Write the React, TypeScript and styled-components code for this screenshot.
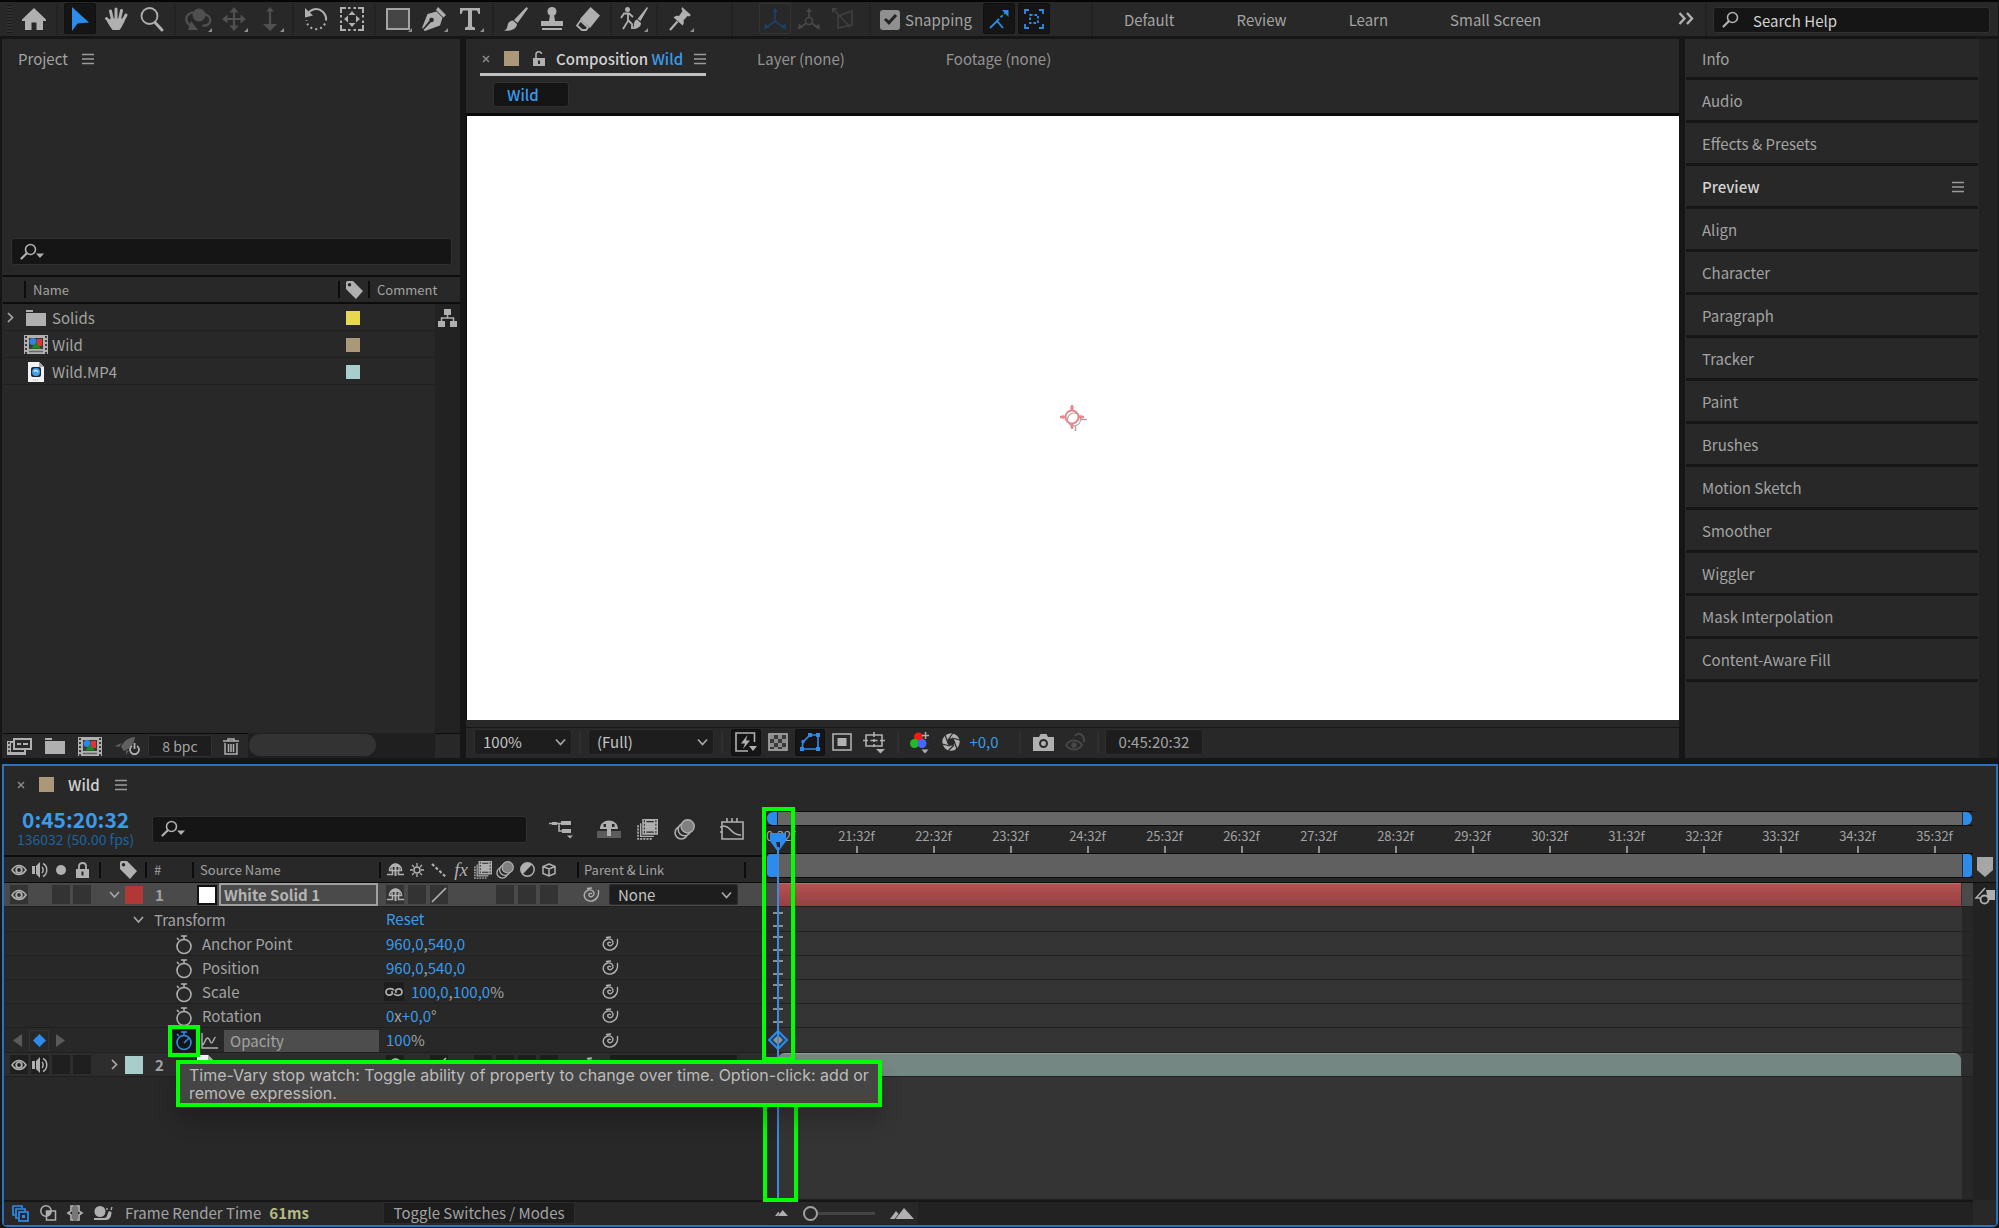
import React from "react";
import styled, { createGlobalStyle, css } from "styled-components";

const ui = `"Noto Sans CJK SC", "Noto Sans", sans-serif`;
const c = {
  gap: "#161616",
  panel: "#282828",
  well: "#151515",
  edge: "#303030",
  field: "#1d1d1d",
  line: "#0c0c0c",
  rule: "#202020",
  text: "#a3a3a3",
  dim: "#8f8f8f",
  bright: "#d2d2d2",
  icon: "#b0b0b0",
  blue: "#2d8ceb",
  value: "#3a9bea",
  frame: "#2873c0",
  lime: "#00ff00",
  scroll: "#222222",
};

const Global = createGlobalStyle`
  *, *::before, *::after { box-sizing: border-box; }
  html, body { margin: 0; background: ${c.gap}; }
  body, button, input, select, table { font-family: ${ui}; font-size: 15px; line-height: 20px; color: ${c.text}; }
  button, input, select { margin: 0; padding: 0; border: 0; background: none; outline: none; }
  svg { display: block; flex: none; }
`;

/* ---------- icons ---------- */

type IconProps = { w?: number; h?: number; box?: string; color?: string; children: React.ReactNode };
const Glyph = styled.svg<{ $color: string }>`
  color: ${(p) => p.$color};
  fill: none;
  stroke: none;
  overflow: visible;
`;
const Icon = ({ w = 24, h = w, box, color = c.icon, children }: IconProps) => (
  <Glyph $color={color} width={w} height={h} viewBox={box ?? `0 0 ${w} ${h}`} aria-hidden="true">
    {children}
  </Glyph>
);
const cur = "currentColor";

const Home = () => (
  <Icon w={24} h={22}>
    <path fill={cur} d="M12 0 0 11.5V13h3v9h6.500v-7.500h5V22H21v-9h3v-1.500z" />
  </Icon>
);
const Arrow = () => (
  <Icon w={18} h={24} color={c.blue}>
    <path fill={cur} d="M1 0v24l5.500-7.500L18 15.500z" />
  </Icon>
);
const Hand = () => (
  <Icon w={24} h={24}>
    <g stroke={cur} strokeWidth="3" strokeLinecap="round">
      <path d="M8.500 13 6.500 4M12 12V2M15.500 12.500 17.500 3.500M18.500 14.500 22 8M7.500 16.500 2.500 11.500" />
    </g>
    <path fill={cur} d="M7 11.500h12l1.500 3L17 21l-1.500 2h-7L6 19.500l-3-5z" />
  </Icon>
);
const Magnifier = ({ w = 24 }: { w?: number }) => (
  <Icon w={w} box="0 0 24 24">
    <circle cx="9.500" cy="9" r="8" stroke={cur} strokeWidth="1.800" />
    <path stroke={cur} strokeWidth="3" strokeLinecap="round" d="m15.500 16 6.500 7" />
  </Icon>
);
const SearchGlyph = ({ menu }: { menu?: boolean }) => (
  <Icon w={24} h={18}>
    <circle cx="10.500" cy="6.500" r="5" stroke={cur} strokeWidth="1.600" />
    <path stroke={cur} strokeWidth="2.200" strokeLinecap="round" d="M6.500 10.500 1.500 15.500" />
    {menu && <path fill={cur} d="M16 10.500h8l-4 4.500z" />}
  </Icon>
);
const Orbit = () => (
  <Icon w={26} h={24} color="#505050">
    <circle cx="14" cy="8" r="6.500" fill={cur} />
    <path stroke={cur} strokeWidth="2.200" d="M8 5C2 7 0 11 2 15c1 2 3 3.500 6 4M20 7c5 2 6.500 6 4.500 9-1.500 2-4 3-7 2.500" />
    <path fill={cur} d="m6 14 7 9H3z" />
  </Icon>
);
const PanCam = () => (
  <Icon w={24} color="#505050">
    <path stroke={cur} strokeWidth="2.200" d="M12 3v18M3 12h18" />
    <path fill={cur} d="m12 0 4.500 5.500h-9zM12 24l4.500-5.500h-9zM0 12l5.500-4.500v9zM24 12l-5.500-4.500v9z" />
  </Icon>
);
const Dolly = () => (
  <Icon w={16} h={24} color="#505050">
    <path stroke={cur} strokeWidth="2.200" d="M8 3v18" />
    <path fill={cur} d="m8 0 4 4.500H4zM8 24l7-7H1z" />
  </Icon>
);
const Rotate = () => (
  <Icon w={24}>
    <path stroke={cur} strokeWidth="2" d="M3.500 7C7 1.500 14 .5 18.500 4.500 22 8 22.500 11 22 13.500" />
    <path stroke={cur} strokeWidth="2" strokeDasharray="2 3" d="M21 16.500C18.500 22 12 23.500 7.500 21 4 19 2.500 16 2.500 13" />
    <path fill={cur} d="M1 1v9.500l8-2z" />
  </Icon>
);
const PanBehind = () => (
  <Icon w={24}>
    <path
      stroke={cur}
      strokeWidth="2"
      d="M1 6V1h5M18 1h5v5M23 18v5h-5M6 23H1v-5M8 1h2.500M13.500 1H16M8 23h2.500M13.500 23H16M1 8v2.500M1 13.500V16M23 8v2.500M23 13.500V16"
    />
    <path fill={cur} d="m12 4 3.500 4h-7zM12 20l3.500-4h-7zM4 12l4-3.500v7zM20 12l-4-3.500v7z" />
  </Icon>
);
const RectShape = () => (
  <Icon w={24} h={22}>
    <rect x="1" y="1" width="22" height="20" fill="#454545" stroke={cur} strokeWidth="1.800" />
  </Icon>
);
const Pen = () => (
  <Icon w={24}>
    <path fill={cur} d="m14.500 4.500 6 6-2.500 8L3 24l-1.500-1L9 15a2.200 2.200 0 1 0-1.500-1.500L1 21.500 0 21 5.500 7zM16 0l8 8-2.500 2.500-7.500-7.500z" />
  </Icon>
);
const TypeT = () => (
  <Icon w={20} h={22}>
    <path fill={cur} d="M0 0h20v6h-1.500L17 2.500h-5v16l3 1V22H5v-2.500l3-1v-16H3L1.500 6H0z" />
  </Icon>
);
const Brush = () => (
  <Icon w={24}>
    <path fill={cur} d="M22.500 0 24 1.500 13.500 16l-3.500-3zM9 13.500l4 3.500c-.5 5-5.500 7.500-13 6.500 3.500-1 3-3.500 4-6.500.8-2.300 2.800-3.500 5-3.500z" />
  </Icon>
);
const Stamp = () => (
  <Icon w={24}>
    <circle cx="12" cy="4.500" r="4.500" fill={cur} />
    <path fill={cur} d="M10 8h4l1 6h8v5H1v-5h8zM2 21h20v2H2z" />
  </Icon>
);
const EraserIcon = () => (
  <Icon w={24}>
    <path fill={cur} d="M14.500 0 24 8.500 14 21 4 12z" />
    <path stroke={cur} strokeWidth="1.800" d="m4.500 13.500 7.500 7-2 2.500H6l-5-4.500z" />
  </Icon>
);
const Roto = () => (
  <Icon w={28} h={24}>
    <circle cx="7.500" cy="2.500" r="2.500" fill={cur} />
    <path stroke={cur} strokeWidth="1.800" d="M1 11l3-4.500h5l4 3.500M8 6.500V14l-5 8M8 13l4 4v5" />
    <path fill={cur} d="M27 0 28 1 20.500 14l-3-2zM17 12.500l4 3.500c0 4-4 6-9 6 2-1.500 1.500-3 2-5.500.5-2.500 1.500-3.500 3-4z" />
  </Icon>
);
const Pin = () => (
  <Icon w={22} h={24}>
    <path fill={cur} d="m13 0 9 8-2 1.500-1.500-.5-4 4.500c.5 2 .3 3.500-.8 5L4.500 10.500C6 9 8 8.500 10 9l3.500-5-1-2z" />
    <path stroke={cur} strokeWidth="2.200" d="M8.500 14.500 1 23" />
  </Icon>
);
const AxisTri = ({ color, ring }: { color: string; ring?: boolean }) => (
  <Icon w={22} h={22} color={color}>
    <path stroke={cur} strokeWidth="1.600" d="M11 3v9M11 13 2.500 19.500M11 13l8.500 6.500" />
    <path fill={cur} d="m11 0 3 4H8zM0 21.500l1-6 4 4zM22 21.500l-1-6-4 4z" />
    {ring && <circle cx="11" cy="13" r="3.500" fill={c.panel} stroke={cur} strokeWidth="1.600" />}
  </Icon>
);
const AxisView = () => (
  <Icon w={22} h={22} color="#404040">
    <path stroke={cur} strokeWidth="1.600" d="M20 3v14L6 20V8zM2 2l16 17" />
    <path fill={cur} d="M0 0h6L0 5z" />
  </Icon>
);
const SnapEdge = () => (
  <Icon w={20} h={20} color={c.blue}>
    <path stroke={cur} strokeWidth="1.800" d="m1 19 7-7 6 7" />
    <path stroke={cur} strokeWidth="1.800" strokeDasharray="3 2" d="m8 12 8-8" />
    <path fill={cur} d="M13 1h6.500v7z" />
  </Icon>
);
const SnapBox = () => (
  <Icon w={20} h={20} color={c.blue}>
    <path stroke={cur} strokeWidth="1.800" d="M1 5V1h4M15 1h4v4M19 15v4h-4M5 19H1v-4" />
    <path stroke={cur} strokeWidth="1.800" strokeDasharray="2.500 2" d="M6 6h8v8H6z" />
  </Icon>
);
const Chevrons = () => (
  <Icon w={16} h={13}>
    <path stroke={cur} strokeWidth="2.400" d="m1.500 1 5 5.500-5 5.500M9 1l5 5.500L9 12" />
  </Icon>
);
const MenuLines = () => (
  <Icon w={12} h={12} color="#9a9a9a">
    <path stroke={cur} strokeWidth="1.500" d="M0 1.500h12M0 6h12M0 10.500h12" />
  </Icon>
);
const Cross = () => (
  <Icon w={8} h={8} color="#8a8a8a">
    <path stroke={cur} strokeWidth="1.500" d="m1 1 6 6M7 1 1 7" />
  </Icon>
);
const OpenLock = () => (
  <Icon w={12} h={15}>
    <path fill={cur} d="M0 7h12v8H0z" />
    <path stroke={cur} strokeWidth="1.600" d="M3 7V3.500c0-3.500 5.500-3.500 5.500-.5" />
    <path fill={c.panel} d="M5 9.500h2V13H5z" />
  </Icon>
);
const Chevron = ({ dir = "down", color = "#a8a8a8" }: { dir?: "down" | "right"; color?: string }) => (
  <Icon w={11} h={11} color={color}>
    <path stroke={cur} strokeWidth="1.700" d={dir === "down" ? "m1 3 4.500 5L10 3" : "m3 1 4.500 4.500L3 10"} />
  </Icon>
);
const Tag = () => (
  <Icon w={18} h={18}>
    <path fill={cur} fillRule="evenodd" d="M1 1.500 2 0h6l10 10-7 8L1 8zM4.500 2a1.800 1.800 0 1 0 0 3.600 1.800 1.800 0 0 0 0-3.600z" />
  </Icon>
);
const Folder = () => (
  <Icon w={20} h={16}>
    <path fill={cur} d="M0 0h7v2H0zM0 3h20v13H0z" />
  </Icon>
);
const CompIcon = ({ w = 24 }: { w?: number }) => (
  <Icon w={w} h={19} box="0 0 24 19">
    <path fill={cur} d="M0 0h24v19H0z" />
    <path fill="#3a3a3a" d="M5 3h14v11H5z" />
    <path stroke="#3a3a3a" strokeWidth="2" strokeDasharray="2 2" d="M2 1v18M22 1v18" />
    <path stroke="#666" strokeWidth="1.500" d="M5 16.500h14" />
    <path fill="#e03434" d="M13 4h5v7h-5z" />
    <circle cx="9" cy="6.500" r="3.500" fill="#2d84e8" />
    <path fill="#1e8a1e" d="m12 7.500 5 6H7z" />
  </Icon>
);
const FileIcon = () => (
  <Icon w={16} h={20}>
    <path fill="#f2f2f2" d="M0 0h11l5 5v15H0z" />
    <path fill="#a8a8a8" d="M11 0v5h5z" />
    <rect x="3" y="5" width="10" height="10" rx="2" fill="#1d2733" />
    <circle cx="8" cy="10" r="4" fill="#3f9fe8" />
    <path stroke="#d8ecff" strokeWidth="1.500" d="M6 9.500c1.500-1.500 3-1 4 .5" />
    <path stroke="#aaa" strokeDasharray="1 1" d="M5 18h6" />
  </Icon>
);
const FlowIcon = () => (
  <Icon w={19} h={18}>
    <path fill={cur} d="M6 0h7v6H6zM0 12h7v6H0zM12 12h7v6h-7z" />
    <path stroke={cur} strokeWidth="1.500" d="M9.500 6v3M3.500 12V9h12v3" />
  </Icon>
);
const Interpret = () => (
  <Icon w={25} h={17}>
    <path fill={cur} d="M0 3h7v2H4v9h13v-2h2v5H0z" />
    <path stroke={c.panel} strokeDasharray="2 2" strokeWidth="1.500" d="M2 4v12" />
    <rect x="7" y="1" width="17" height="10" stroke={cur} strokeWidth="2" />
    <path stroke={cur} strokeWidth="2" d="M10 6h4M16 6h5" />
  </Icon>
);
const Rocket = () => (
  <Icon w={26} h={18}>
    <path fill="#606060" d="M20 0C12 1 8 5 6 10l3 4c6-2 10-7 11-14zM7 6 0 9l4 1zM11 14v4l3-5z" />
    <path stroke={cur} strokeWidth="1.800" d="M17 9a4.500 4.500 0 1 0 5 0M19.500 6v6" />
  </Icon>
);
const Trash = () => (
  <Icon w={16} h={17}>
    <path stroke={cur} strokeWidth="1.500" d="M0 3h16M5 3V1h6v2M2 5v11h12V5M5.500 6v8M8 6v8M10.500 6v8" />
  </Icon>
);
const FastPrev = () => (
  <Icon w={22} h={20}>
    <path stroke={cur} strokeWidth="1.600" d="M19.500 10V1H1v18h12" />
    <path fill={cur} d="M12.500 3 6 11.500h4L8 17l7-8.500h-4zM14 14h8l-4 5z" />
  </Icon>
);
const Checker = () => (
  <Icon w={20} h={18}>
    <rect x="1" y="1" width="18" height="16" fill="#3a3a3a" stroke={cur} strokeWidth="1.600" />
    <path fill="#8c8c8c" d="M2 2h4v4H2zM10 2h4v4h-4zM6 6h4v4H6zM14 6h4v4h-4zM2 10h4v4H2zM10 10h4v4h-4zM6 14h4v2H6zM14 14h4v2h-4z" />
  </Icon>
);
const MaskShape = () => (
  <Icon w={20} h={18} color={c.blue}>
    <path stroke={cur} strokeWidth="1.600" d="M2 16 3 9l7-7h8v14z" />
    <path fill={cur} d="M0 14h4v4H0zM16 14h4v4h-4zM16 0h4v4h-4zM8 0h4v4H8zM1.500 7h3v3h-3z" />
  </Icon>
);
const Region = () => (
  <Icon w={20} h={18}>
    <rect x="1" y="1" width="18" height="16" stroke={cur} strokeWidth="1.600" />
    <path fill={cur} d="M5.500 5h9v8h-9z" />
  </Icon>
);
const GridIcon = () => (
  <Icon w={22} h={21}>
    <path stroke={cur} strokeWidth="1.600" d="M3 3h16v11H3zM11 0v5M11 7v3M11 12v3M0 8.500h5M7.500 8.500h7M17 8.500h5" />
    <path fill={cur} d="M13 17h9l-4.500 4.500z" />
  </Icon>
);
const Channels = () => (
  <Icon w={19} h={21}>
    <circle cx="8.500" cy="5" r="4.500" fill="#f21d0c" />
    <circle cx="4.500" cy="11.500" r="4.500" fill="#22bb22" />
    <circle cx="12" cy="11.500" r="4.500" fill="#4668ff" />
    <path stroke={cur} strokeWidth="1.500" d="M12 3.500h7M15.500 0v7" />
    <path fill={cur} d="M11.500 17.500h7l-3.500 4z" />
  </Icon>
);
const Aperture = () => (
  <Icon w={18} h={18}>
    <circle cx="9" cy="9" r="6.200" stroke={cur} strokeWidth="5" />
    <path stroke={c.panel} strokeWidth="1.200" d="M11 0 6 7M18 7l-8-2M15 16l-3-8M6 18l6-6M0 11l8 2M3 2l3 8" />
  </Icon>
);
const Camera = () => (
  <Icon w={21} h={17}>
    <path fill={cur} fillRule="evenodd" d="M0 3h6l1.500-3h6L15 3h6v14H0zM10.500 5a4.500 4.500 0 1 0 0 9 4.500 4.500 0 0 0 0-9z" />
    <circle cx="10.500" cy="9.500" r="2.500" fill={cur} />
  </Icon>
);
const ShowSnap = () => (
  <Icon w={21} h={19} color="#484848">
    <path stroke={cur} strokeWidth="1.800" d="M1 12c4-6 12-6 16 0-4 6-12 6-16 0z" />
    <circle cx="9" cy="12" r="2.800" fill={cur} />
    <path stroke={cur} strokeWidth="2" d="M10 3c3-4 8-2 9 3v3" />
  </Icon>
);
const Anchor = () => (
  <Icon w={28} h={28}>
    <g color="#a8a8a8">
      <circle cx="15" cy="15.500" r="6.500" stroke={cur} strokeWidth="1.200" />
      <path stroke={cur} strokeWidth="1.500" d="M22 15.500h6M16.500 22v5" />
    </g>
    <g color="#e8888e">
      <circle cx="13" cy="13" r="6.500" stroke={cur} strokeWidth="2" />
      <path stroke={cur} strokeWidth="2.500" d="M13 1v5M13 20v5M1 13h5M20 13h5" />
      <path stroke={cur} strokeWidth="1.200" d="M11 4h4M4 11v4M22 11v4M11 22h4" />
    </g>
  </Icon>
);
const Eye = () => (
  <Icon w={16} h={12}>
    <path stroke={cur} strokeWidth="1.600" d="M1 6c4-6 10-6 14 0-4 6-10 6-14 0z" />
    <circle cx="8" cy="6" r="2.800" stroke={cur} strokeWidth="1.800" />
  </Icon>
);
const Speaker = () => (
  <Icon w={17} h={16}>
    <path fill={cur} d="M0 4h3v8H0zM4 4l4-4v16l-4-4z" />
    <path stroke={cur} strokeWidth="1.500" d="M10 5c1.500 1.500 1.500 4.500 0 6M11 1.500c5 2.500 5 10.500 0 13" />
  </Icon>
);
const Dot = () => (
  <Icon w={10} h={10}>
    <circle cx="5" cy="5" r="5" fill={cur} />
  </Icon>
);
const Lock = () => (
  <Icon w={13} h={16}>
    <path fill={cur} fillRule="evenodd" d="M0 7h13v9H0zM5.500 9.500v4h2v-4z" />
    <path stroke={cur} strokeWidth="1.800" d="M3 7V4c0-4 7-4 7 0v3" />
  </Icon>
);
const Shy = () => (
  <Icon w={17} h={14}>
    <path stroke={cur} strokeWidth="1.500" d="M2.500 7.500C2.500-1 14.500-1 14.500 7.500z" />
    <path fill={cur} d="M4 2.500C7-.5 10-.5 13 2.500V4H4zM7.500 3h2v10h-2z" />
    <path stroke={cur} strokeWidth="1.500" d="M5 3v5M12 3v5M0 11.500h6M11 11.500h6M5.500 8v4M11.500 8v4" />
  </Icon>
);
const Sun = () => (
  <Icon w={14} h={14}>
    <circle cx="7" cy="7" r="3" stroke={cur} strokeWidth="1.500" />
    <path stroke={cur} strokeWidth="1.300" d="M7 0v3M7 11v3M0 7h3M11 7h3M2 2l2 2M10 10l2 2M12 2l-2 2M4 10l-2 2" />
  </Icon>
);
const Quality = ({ solid }: { solid?: boolean }) => (
  <Icon w={16} h={16}>
    {solid ? (
      <path stroke={cur} strokeWidth="1.700" d="M1 15 15 1" />
    ) : (
      <path stroke={cur} strokeWidth="2.200" strokeDasharray="3 2" d="M1 2 15 15" />
    )}
  </Icon>
);
const Blend = ({ w = 18 }: { w?: number }) => (
  <Icon w={w} h={w} box="0 0 20 20">
    <path stroke={cur} strokeWidth="1.600" strokeDasharray="2 1" d="M1 6v13h13" />
    <path stroke={cur} strokeWidth="1.300" d="M3.500 4v12.500H16" />
    <path fill={cur} d="M5 0h15v15H5z" />
    <path stroke={c.panel} strokeWidth="1.200" d="M9 2.500h7M9 12.500h7" />
    <path stroke={c.panel} strokeDasharray="2 1.500" d="M7 1v14M18 1v14" />
  </Icon>
);
const Blur = ({ w = 18 }: { w?: number }) => (
  <Icon w={w} h={w} box="0 0 20 20">
    <circle cx="7" cy="13" r="6" stroke={cur} strokeWidth="1.500" fill={c.panel} />
    <circle cx="10" cy="10" r="6" stroke={cur} strokeWidth="1.500" fill={c.panel} />
    <circle cx="13" cy="7" r="6.300" fill="#808080" stroke={cur} strokeWidth="1.300" />
  </Icon>
);
const Adjust = () => (
  <Icon w={15} h={15}>
    <circle cx="7.500" cy="7.500" r="6.700" stroke={cur} strokeWidth="1.500" />
    <path fill={cur} d="M12 2.500A6.500 6.500 0 1 0 3 12z" />
  </Icon>
);
const Cube = () => (
  <Icon w={14} h={14}>
    <path stroke={cur} strokeWidth="1.500" d="m7 1 6 2.500v7L7 13l-6-2.500v-7zM1 3.500 7 6l6-2.500M7 6v7" />
  </Icon>
);
const Swirl = () => (
  <Icon w={17} h={15}>
    <path
      stroke={cur}
      strokeWidth="1.400"
      strokeLinecap="round"
      d="M8.500 6.500C7 5.500 5 7 6 8.700c1.200 1.800 4.500 1 5-1.500.5-3-2.500-4.800-5.500-4.200C2 4 .5 7 1.500 10c1.200 3.600 5.500 5 9 3.500C14 12 16 8 15.500 3.500M8.500 1l-4 .5"
    />
  </Icon>
);
const Stopwatch = ({ on }: { on?: boolean }) => (
  <Icon w={16} h={19} color={on ? c.blue : c.icon}>
    <circle cx="8" cy="11.500" r="7" stroke={cur} strokeWidth="1.600" />
    <path stroke={cur} strokeWidth="1.600" d="M5 1h6M8 1v3M1 3l2 2" />
    {on && <path stroke={cur} strokeWidth="1.600" d="m8 12 5-5" />}
  </Icon>
);
const GraphMini = () => (
  <Icon w={17} h={16}>
    <path stroke={cur} strokeWidth="1.400" d="M1 0v15h16M1 12c3 0 3-7 5.500-7S9 10 10.500 10 13 5 14.500 4" />
  </Icon>
);
const LinkIcon = () => (
  <Icon w={18} h={8}>
    <path stroke={cur} strokeWidth="1.600" d="M9 2C6 0 1 0 1 4s5 4 7 1M9 6c3 2 8 2 8-2s-5-4-7-1M6 4h2M10 4h2" />
  </Icon>
);
const Triangle = ({ dir }: { dir: "left" | "right" }) => (
  <Icon w={9} h={13} color="#5a5a5a">
    <path fill={cur} d={dir === "left" ? "M9 0v13L0 6.500z" : "M0 0v13l9-6.500z"} />
  </Icon>
);
const Diamond = () => (
  <Icon w={13} h={13} color={c.blue}>
    <path fill={cur} d="m6.500 0 6.500 6.500L6.500 13 0 6.500z" />
  </Icon>
);
const MiniFlow = () => (
  <Icon w={24} h={18}>
    <path stroke={cur} strokeWidth="1.600" d="M0 3.500h12M10 4v7h4" />
    <path fill={cur} d="M3 2h5v3H3zM12 1h10v4H12zM13 9h9v4h-9zM18 15.500h6l-3 3z" />
  </Icon>
);
const ShyBig = () => (
  <Icon w={24} h={18}>
    <path fill="#5c5c5c" d="M0 11h24v7H0z" />
    <path fill={cur} fillRule="evenodd" d="M3 9C3-2.500 21-2.500 21 9h-7v7h-4V9zM6.500 4v3H9V4zM15 4v3h2.500V4z" />
  </Icon>
);
const GraphEd = () => (
  <Icon w={24} h={22}>
    <path stroke={cur} strokeWidth="1.600" d="M2 4h21v17H2zM0 9h3M0 14h3M7 0v4M12 0v4M17 0v4" />
    <path stroke={cur} strokeWidth="1.600" d="M3 8c9 0 7 9 18 9" />
  </Icon>
);
const IBeam = () => (
  <Icon w={10} h={15}>
    <path stroke={cur} strokeWidth="1.600" d="M0 1h10M0 14h10M5 1v13" />
  </Icon>
);
const KeyFrame = () => (
  <Icon w={20} h={20}>
    <path fill="#1b3f66" stroke={c.blue} strokeWidth="2" d="m10 1 9 9-9 9-9-9z" />
    <path fill="#9c9284" d="m10 5 5 5-5 5-5-5z" />
  </Icon>
);
const HeadMark = () => (
  <Icon w={16} h={20} color={c.blue}>
    <path fill={cur} d="M0 0h16v8L8 19 0 8z" />
    <path fill="#1c2a3a" d="M6 9h4v5L8 17z" />
  </Icon>
);
const Marker = () => (
  <Icon w={16} h={20}>
    <path fill="#a6a6a6" d="M0 0h16v13l-8 7-8-7z" />
  </Icon>
);
const CompMark = () => (
  <Icon w={20} h={17}>
    <path fill={cur} d="M11 3h9v10h-7z" />
    <path stroke={cur} strokeWidth="1.500" d="M10 1 1 11h6" />
    <circle cx="9.500" cy="12.500" r="4" fill={c.scroll} stroke={cur} strokeWidth="1.800" />
  </Icon>
);
const Panes = () => (
  <Icon w={17} h={17} color={c.blue}>
    <path stroke={cur} strokeWidth="1.700" d="M3 10H1V1h9v2M6 13H4V4h9v2" />
    <rect x="7" y="7" width="9" height="9" stroke={cur} strokeWidth="1.700" />
    <path fill={cur} d="M10 10h3v3h-3z" />
  </Icon>
);
const Modes = () => (
  <Icon w={16} h={16}>
    <circle cx="6" cy="6" r="5.200" stroke={cur} strokeWidth="1.500" />
    <path stroke={cur} strokeWidth="1.500" d="M6.500 6h9v9h-9z" />
    <path fill={cur} d="M6.500 6h5c0 3-2 5-5 5z" />
  </Icon>
);
const InOut = () => (
  <Icon w={16} h={16}>
    <path fill="#777" d="M5 0h6v16H5z" />
    <path stroke={cur} strokeWidth="1.700" d="M6 1H4v5L1 8l3 2v5h2M10 1h2v5l3 2-3 2v5h-2" />
  </Icon>
);
const Snail = () => (
  <Icon w={19} h={14}>
    <circle cx="6" cy="5.500" r="5.500" fill={cur} />
    <path fill={cur} d="M0 12h10c4 0 3-5 5-7l2.500 1c0 5-2 8-5.500 8H0z" />
    <path stroke={cur} strokeWidth="1.300" d="M13 4V2M17 4l1-3" />
  </Icon>
);
const Mountains = ({ w, h }: { w: number; h: number }) => (
  <Icon w={w} h={h} box="0 0 24 11">
    <path fill={cur} d="M0 11 6 3l2.500 3L4.500 11zM5.500 11 14 0l10 11z" />
  </Icon>
);

/* ---------- shell ---------- */

const Page = styled.div`
  display: grid;
  grid-template-rows: 39px minmax(0, 1fr) 463px;
  height: 100vh;
  padding: 0 1px 1px 2px;
  background: ${c.gap};
  overflow: hidden;
`;
const Row = styled.div<{ $gap?: number }>`
  display: flex;
  align-items: center;
  gap: ${(p) => p.$gap ?? 0}px;
`;
const Grow = styled.div`
  flex: 1;
`;

/* ---------- top bar ---------- */

const TopBar = styled.header`
  display: flex;
  align-items: center;
  margin: 0 0 0 -2px;
  padding: 0 8px 1px 7px;
  background: ${c.panel};
  border-top: 2px solid #060606;
  border-bottom: 3px solid ${c.gap};
`;
const Grip = styled.div`
  width: 5px;
  height: 28px;
  background: repeating-linear-gradient(#191919 0 1px, #303030 1px 3px);
`;
const Tools = styled.div<{ $end?: number }>`
  display: flex;
  gap: 4px;
  padding: 0 ${(p) => p.$end ?? 6}px 0 6px;
`;
const Tool = styled.button<{ $on?: boolean; $more?: boolean; $ghost?: boolean }>`
  position: relative;
  display: grid;
  place-items: center;
  width: 32px;
  height: 31px;
  border-radius: 3px;
  ${(p) => p.$on && css`background: ${c.well}; box-shadow: inset 0 0 0 1px #101010;`}
  ${(p) => p.$ghost && css`box-shadow: inset 0 0 0 1px #343434;`}
  ${(p) =>
    p.$more &&
    css`
      &::after {
        content: "";
        position: absolute;
        right: 2px;
        bottom: 2px;
        border: 2px solid ${c.dim};
        border-top-color: transparent;
        border-left-color: transparent;
      }
    `}
`;
const Split = styled.div<{ $h?: number }>`
  width: 2px;
  height: ${(p) => p.$h ?? 32}px;
  background: #222;
`;
const AxisGroup = styled.div`
  display: flex;
  gap: 2px;
  padding: 0 10px 0 26px;
`;
const Snap = styled.label`
  display: flex;
  align-items: center;
  gap: 5px;
  margin: 0 11px 0 9px;
  padding-top: 2px;
`;
const Tick = styled.input`
  appearance: none;
  display: grid;
  place-items: center;
  width: 20px;
  height: 20px;
  border-radius: 3px;
  background: #909090;
  &:checked::after {
    content: "";
    width: 7px;
    height: 12px;
    border: solid #242424;
    border-width: 0 3px 3px 0;
    rotate: 42deg;
    translate: 0 -2px;
  }
`;
const WorkspaceEdge = styled(Split)`
  margin-left: 41px;
  height: 34px;
`;
const Workspaces = styled.nav`
  display: flex;
  align-items: center;
  gap: 62px;
  padding: 2px 0 0 31px;
`;
const Plain = styled.button<{ $dim?: boolean }>`
  color: ${(p) => (p.$dim ? "#939393" : c.text)};
  white-space: nowrap;
`;
const HelpBox = styled.label`
  display: flex;
  align-items: center;
  gap: 7px;
  width: 277px;
  height: 26px;
  margin: 3px 0 0 6px;
  padding-left: 8px;
  border: 1px solid ${c.edge};
  border-radius: 3px;
  background: ${c.well};
`;
const TextBox = styled.input`
  flex: 1;
  min-width: 0;
  padding-top: 1px;
  color: ${c.bright};
  &::placeholder { color: ${c.bright}; opacity: 1; }
`;

/* ---------- panels ---------- */

const Main = styled.main`
  display: grid;
  grid-template-columns: 458px minmax(0, 1fr) 313px;
  gap: 6px;
  padding-bottom: 6px;
  min-height: 0;
`;
const Panel = styled.section`
  display: flex;
  flex-direction: column;
  min-width: 0;
  min-height: 0;
  background: ${c.panel};
`;
const Tabs = styled.div`
  display: flex;
  align-items: center;
  height: 39px;
`;
const Title = styled.h2<{ $on?: boolean }>`
  margin: 0;
  font-size: 15px;
  font-weight: ${(p) => (p.$on ? 500 : 400)};
  color: ${(p) => (p.$on ? c.bright : c.text)};
`;
const ProjectTabs = styled(Tabs)`
  gap: 14px;
  padding-left: 16px;
`;
const SearchWell = styled.label`
  display: flex;
  align-items: center;
  height: 27px;
  padding-left: 8px;
  gap: 8px;
  border: 1px solid ${c.edge};
  border-radius: 3px;
  background: ${c.well};
`;
const ProjectSearch = styled(SearchWell)`
  margin: 160px 8px 10px 9px;
`;
const Assets = styled.div`
  flex: 1;
  min-height: 0;
  margin-left: 1px;
  background: linear-gradient(to left, ${c.scroll} 25px, transparent 25px);
`;
const AssetTable = styled.table`
  width: 100%;
  table-layout: fixed;
  border-collapse: separate;
  border-spacing: 0;
  th, td { padding: 0; text-align: left; font-weight: 400; white-space: nowrap; }
  thead th {
    height: 29px;
    border-top: 2px solid ${c.line};
    border-bottom: 2px solid ${c.line};
    background: ${c.panel};
    font-size: 13px;
  }
  tbody td { height: 27px; padding-top: 1px; border-bottom: 1px solid ${c.rule}; }
  tbody td:last-child { border-bottom: 0; }
`;
const Divided = styled.div<{ $pad?: number }>`
  display: flex;
  align-items: center;
  height: 17px;
  padding-left: ${(p) => p.$pad ?? 7}px;
  border-left: 2px solid ${c.line};
`;
const AssetName = styled.div`
  display: grid;
  grid-template-columns: 24px 1fr;
  align-items: center;
  gap: 4px;
  svg { justify-self: center; }
`;
const Swatch = styled.div<{ $c: string; $s?: number }>`
  width: ${(p) => p.$s ?? 14}px;
  height: ${(p) => p.$s ?? 14}px;
  background: ${(p) => p.$c};
  flex: none;
`;
const Centered = styled.div`
  display: grid;
  place-items: center;
`;
const Twirl = styled.div`
  padding-left: 2px;
`;
const ProjectFoot = styled.div`
  display: grid;
  grid-template-columns: 245px 1fr 25px;
  height: 25px;
  margin-left: 1px;
`;
const FootTools = styled.div`
  display: flex;
  align-items: center;
  gap: 13px;
  padding-left: 4px;
  border-top: 1px solid ${c.line};
`;
const Bare = styled.button`
  display: grid;
  place-items: center;
`;
const Bits = styled.button`
  width: 64px;
  height: 22px;
  margin: 0 -2px 0 -6px;
  border: 1px solid ${c.edge};
  border-radius: 3px;
  background: ${c.field};
  font-size: 14px;
`;
const Rail = styled.div`
  background: #1f1f1f;
  padding: 1px;
`;
const Thumb = styled.div`
  width: 127px;
  height: 22px;
  border-radius: 11px;
  background: #333;
`;
const Corner = styled.div`
  border-top: 1px solid ${c.line};
`;

/* ---------- composition ---------- */

const CompTabs = styled(Tabs)`
  gap: 51px;
  padding-left: 14px;
`;
const ActiveTab = styled.div`
  position: relative;
  display: flex;
  align-items: center;
  gap: 11px;
  padding: 0 0 0 2px;
  height: 100%;
  &::after {
    content: "";
    position: absolute;
    inset: auto 0 2px 0;
    height: 3px;
    background: #c0c0c0;
  }
`;
const Blue = styled.span`
  color: ${c.value};
`;
const Crumbs = styled.div`
  height: 35px;
  padding: 4px 0 0 27px;
`;
const Crumb = styled.button`
  display: block;
  width: 76px;
  height: 25px;
  padding-left: 13px;
  text-align: left;
  border: 1px solid ${c.edge};
  border-radius: 3px;
  background: ${c.well};
  color: ${c.value};
  font-weight: 500;
`;
const Canvas = styled.div`
  flex: 1;
  display: grid;
  place-items: center;
  border: solid #0a0a0a;
  border-width: 3px 0 0 1px;
  background: #fff;
`;
const ViewBar = styled.div`
  display: flex;
  align-items: center;
  height: 31px;
  margin-top: 7px;
  padding: 0 0 2px 8px;
  border-top: 1px solid ${c.gap};
`;
const Pick = styled.div<{ $w: number; $h?: number }>`
  position: relative;
  width: ${(p) => p.$w}px;
  height: ${(p) => p.$h ?? 26}px;
  border-radius: 3px;
  background: ${c.field};
  box-shadow: inset 0 0 0 1px #2d2d2d;
  svg { position: absolute; right: 6px; top: 50%; translate: 0 -50%; pointer-events: none; }
`;
const Select = styled.select`
  appearance: none;
  width: 100%;
  height: 100%;
  padding: 0 20px 0 9px;
  color: #c4c4c4;
`;
const Bar = styled.div<{ $l?: number; $r?: number }>`
  width: 2px;
  height: 22px;
  margin: 0 ${(p) => p.$r ?? 7}px 0 ${(p) => p.$l ?? 7}px;
  background: #303030;
`;
const ViewTool = styled(Tool)`
  width: 30px;
  height: 27px;
  margin-right: 2px;
`;
const Exposure = styled.button`
  width: 38px;
  margin-left: -3px;
  color: ${c.value};
`;
const Stamped = styled.button`
  width: 98px;
  height: 26px;
  border-radius: 3px;
  background: ${c.field};
  box-shadow: inset 0 0 0 1px #2d2d2d;
`;

/* ---------- side list ---------- */

const Side = styled.aside`
  display: flex;
  background: ${c.panel};
`;
const SideList = styled.div`
  flex: 1;
  padding: 0 1px;
`;
const SideItem = styled.button<{ $on?: boolean }>`
  display: flex;
  align-items: center;
  justify-content: space-between;
  width: 100%;
  height: 43px;
  padding: 2px 14px 0 16px;
  border-bottom: 3px solid ${c.gap};
  color: ${(p) => (p.$on ? c.bright : c.text)};
  font-weight: ${(p) => (p.$on ? 500 : 400)};
  &:first-child { height: 41px; }
`;
const SideScroll = styled.div`
  width: 19px;
  background: ${c.scroll};
`;

/* ---------- timeline ---------- */

const Timeline = styled.section`
  position: relative;
  display: flex;
  flex-direction: column;
  border: 2px solid ${c.frame};
  border-radius: 0 0 5px 5px;
  background: ${c.panel};
`;
const TimeTabs = styled.div`
  display: flex;
  align-items: center;
  gap: 15px;
  height: 39px;
  padding: 0 0 2px 13px;
`;
const TimeBody = styled.div`
  flex: 1;
  display: grid;
  grid-template-columns: 762px minmax(0, 1fr) 23px;
  min-height: 0;
`;
const Col = styled.div`
  position: relative;
  display: flex;
  flex-direction: column;
  min-width: 0;
`;
const Controls = styled.div`
  display: flex;
  align-items: center;
  height: 50px;
  padding-bottom: 2px;
`;
const Clock = styled.div`
  width: 148px;
  padding-left: 13px;
  line-height: 20px;
`;
const Big = styled.button`
  display: block;
  margin-left: 5px;
  color: ${c.value};
  font-size: 21px;
  font-weight: 700;
`;
const Small = styled.div`
  color: #1c649f;
  font-size: 14px;
`;
const LayerSearch = styled(SearchWell)`
  width: 375px;
  margin-right: 22px;
`;
const ToggleSet = styled.div`
  display: flex;
  align-items: center;
  gap: 16px;
  margin: 0 25px 0 24px;
`;
const LayerGrid = styled.div`
  display: grid;
  grid-template-columns: 95px 46px 47px 187px 198px 167px 22px;
  align-items: center;
`;
const LayerHead = styled(LayerGrid)`
  height: 28px;
  border-top: 2px solid ${c.line};
  border-bottom: 1px solid ${c.line};
  font-size: 13px;
`;
const Outline = styled(LayerGrid)<{ $tall?: boolean; $bg?: string }>`
  height: ${(p) => (p.$tall ? 25 : 24)}px;
  border-bottom: 1px solid ${c.rule};
  background: ${(p) => p.$bg ?? "transparent"};
`;
const Cells = styled.div<{ $gap?: number; $pad?: number }>`
  display: flex;
  align-items: center;
  gap: ${(p) => p.$gap ?? 3}px;
  padding-left: ${(p) => p.$pad ?? 6}px;
`;
const Cell = styled.button<{ $bg?: string }>`
  display: grid;
  place-items: center;
  flex: none;
  width: 18px;
  height: 19px;
  background: ${(p) => p.$bg ?? "transparent"};
`;
const HeadCell = styled(Divided)`
  height: 16px;
`;
const LabelCell = styled.div`
  display: flex;
  align-items: center;
  justify-content: flex-end;
  gap: 5px;
  padding-right: 2px;
`;
const Num = styled.div`
  padding-left: 10px;
  font-weight: 700;
`;
const NameBox = styled.div`
  display: flex;
  align-items: center;
  gap: 2px;
  padding: 0 1px 0 5px;
`;
const SolidIcon = styled.div`
  width: 20px;
  height: 20px;
  border: 2px solid #111;
  background: #fff;
`;
const NameInput = styled.input`
  flex: 1;
  min-width: 0;
  height: 23px;
  padding-left: 3px;
  border: 2px solid #a0a0a0;
  background: #4a4a4a;
  color: #b4b4b4;
  font-weight: 700;
`;
const Prop = styled.div<{ $pad: number }>`
  grid-column: 2 / 5;
  display: flex;
  align-items: center;
  gap: 10px;
  height: 100%;
  padding: 1px 0 0 ${(p) => p.$pad}px;
`;
const Value = styled.div`
  display: flex;
  align-items: center;
  gap: 8px;
  padding-left: 7px;
  color: ${c.text};
`;
const LinkCell = styled.span`
  display: grid;
  place-items: center;
  width: 20px;
  height: 19px;
  margin: 0 -1px 0 -2px;
  background: ${c.field};
`;
const Hot = styled.button`
  color: ${c.value};
`;
const Whip = styled(Bare)<{ $in?: number }>`
  justify-self: start;
  margin-left: ${(p) => p.$in ?? 25}px;
`;
const StopCell = styled(Cell)`
  position: relative;
  width: 22px;
  height: 22px;
  margin-left: -3px;
  background: ${c.well};
  &::after {
    content: "";
    position: absolute;
    inset: -5px;
    border: 4px solid ${c.lime};
    z-index: 3;
  }
`;
const PropGraph = styled.div`
  margin-left: -4px;
`;
const Lit = styled.div`
  flex: 1;
  height: 22px;
  padding: 1px 0 0 6px;
  margin-left: -4px;
  background: #4d4d4d;
`;
const KeyNav = styled.div`
  display: flex;
  align-items: center;
  gap: 8px;
  padding-left: 9px;
`;
const KeyCell = styled(Cell)`
  box-shadow: 0 0 0 1px #333;
`;
const Fill = styled.div<{ $bg?: string }>`
  flex: 1;
  background: ${(p) => p.$bg ?? "transparent"};
`;
const Foot = styled.div<{ $bg?: string }>`
  display: flex;
  align-items: center;
  height: 25px;
  padding-bottom: 1px;
  border-top: 2px solid ${c.gap};
  background: ${(p) => p.$bg ?? c.panel};
`;
const FootIcons = styled.div`
  display: flex;
  gap: 11px;
  width: 121px;
  padding-left: 8px;
  align-items: center;
`;
const Timing = styled.span`
  width: 258px;
`;
const Lime = styled.b`
  margin-left: 8px;
  font-weight: 700;
  color: #b4bb82;
`;
const Toggle = styled.button`
  width: 192px;
  height: 22px;
  background: ${c.field};
  border: 1px solid #2c2c2c;
`;
const Fx = styled.i`
  font-family: "Liberation Serif", serif;
  font-size: 19px;
  line-height: 16px;
  color: ${c.icon};
`;

/* ---------- tracks ---------- */

const NavBar = styled.div<{ $h: number; $bg: string; $r: string }>`
  display: grid;
  grid-template-columns: 10px 1fr 9px;
  gap: 1px;
  flex: none;
  height: ${(p) => p.$h}px;
  padding: 0 1px;
  border: solid ${c.line};
  border-width: 1px 0;
  & > :nth-child(1) { background: ${c.blue}; border-radius: ${(p) => p.$r} 0 0 ${(p) => p.$r}; }
  & > :nth-child(2) { background: ${(p) => p.$bg}; }
  & > :nth-child(3) { background: ${c.blue}; border-radius: 0 ${(p) => p.$r} ${(p) => p.$r} 0; }
`;
const Ruler = styled.div`
  display: flex;
  height: 27px;
  padding-top: 1px;
  overflow: hidden;
  font-size: 13px;
`;
const Mark = styled.div`
  flex: 0 0 77px;
  display: flex;
  flex-direction: column;
  align-items: center;
  justify-content: space-between;
  line-height: 18px;
  &::after { content: ""; width: 2px; height: 7px; background: ${c.dim}; }
  &:first-child { flex-basis: 52px; align-items: flex-start; }
  &:first-child::after { margin-left: 11px; }
`;
const Pad = styled.div<{ $h: number; $line?: boolean }>`
  flex: none;
  height: ${(p) => p.$h}px;
  ${(p) => p.$line && css`border-bottom: 1px solid ${c.line};`}
`;
const Track = styled.div<{ $tall?: boolean; $side?: string; $fill?: boolean }>`
  display: grid;
  grid-template-columns: 12px 1fr 11px;
  align-items: center;
  flex: ${(p) => (p.$fill ? "1" : "none")};
  height: ${(p) => (p.$tall ? 25 : 24)}px;
  border-bottom: 1px solid ${c.rule};
  background: linear-gradient(
    to right,
    ${(p) => p.$side ?? "#272727"} 12px,
    #343434 12px calc(100% - 11px),
    ${(p) => p.$side ?? "#272727"} calc(100% - 11px)
  );
`;
const Beam = styled.div<{ $w: number }>`
  justify-self: end;
  margin-right: -${(p) => p.$w / 2}px;
  z-index: 1;
`;
const Clip = styled.div<{ $bg: string; $top: string; $fold?: boolean }>`
  grid-column: 2;
  height: 100%;
  margin-right: 1px;
  border-top: 1px solid ${(p) => p.$top};
  border-radius: ${(p) => (p.$fold ? "7px 7px 0 0" : "0")};
  background: ${(p) => p.$bg};
`;
const Head = styled.div`
  position: absolute;
  top: 28px;
  bottom: 25px;
  left: 4px;
  width: 16px;
  z-index: 2;
  &::after {
    content: "";
    position: absolute;
    inset: 14px 7px 0;
    background: #3a8ae0;
  }
`;
const Outlined = styled.div<{ $w: number; $h: number; $x: number; $y: number }>`
  position: absolute;
  left: ${(p) => p.$x}px;
  top: ${(p) => p.$y}px;
  width: ${(p) => p.$w}px;
  height: ${(p) => p.$h}px;
  border: 4px solid ${c.lime};
  z-index: 3;
`;
const Tip = styled.div`
  position: absolute;
  left: 172px;
  top: 294px;
  width: 706px;
  padding: 2px 8px 1px 9px;
  border: 4px solid ${c.lime};
  background: #454545;
  box-shadow: 0 14px 20px rgba(0, 0, 0, 0.2);
  color: #bcbcbc;
  font: 16px/18px Inter, "Liberation Sans", sans-serif;
  z-index: 4;
`;
const Gutter = styled(Col)`
  align-items: center;
  background: ${c.scroll};
`;
const GutterTop = styled.div`
  display: flex;
  align-items: flex-end;
  justify-content: center;
  width: 100%;
  height: 78px;
  padding-bottom: 5px;
  background: ${c.panel};
  border-bottom: 1px solid ${c.line};
`;
const CompSlot = styled.div`
  display: grid;
  place-items: center;
  height: 25px;
`;
const GutterFoot = styled.div`
  width: 100%;
  height: 25px;
  background: ${c.panel};
`;
const MoreButton = styled(Bare)`
  margin-right: 11px;
`;
const Zoom = styled.div`
  display: flex;
  align-items: center;
  gap: 15px;
  width: 152px;
  height: 100%;
  padding-left: 9px;
  background: ${c.panel};
`;
const Range = styled.input`
  appearance: none;
  width: 72px;
  height: 14px;
  background: linear-gradient(#444, #444) center / 100% 3px no-repeat;
  &::-webkit-slider-thumb {
    appearance: none;
    width: 15px;
    height: 15px;
    border: 2px solid #a0a0a0;
    border-radius: 50%;
    background: ${c.panel};
  }
`;

/* ---------- data ---------- */

const sidePanels = [
  "Info", "Audio", "Effects & Presets", "Preview", "Align", "Character", "Paragraph", "Tracker",
  "Paint", "Brushes", "Motion Sketch", "Smoother", "Wiggler", "Mask Interpolation", "Content-Aware Fill",
];
const assets = [
  { name: "Solids", color: "#e5d850", icon: <Folder />, open: true },
  { name: "Wild", color: "#ab9878", icon: <CompIcon /> },
  { name: "Wild.MP4", color: "#a9cdca", icon: <FileIcon /> },
];
const marks = Array.from({ length: 16 }, (_, i) => (i === 0 ? "0:32f" : `${20 + i}:32f`));
const props: { name: string; value: React.ReactNode; linked?: boolean }[] = [
  { name: "Anchor Point", value: <><Blue>960,0</Blue>,<Blue>540,0</Blue></> },
  { name: "Position", value: <><Blue>960,0</Blue>,<Blue>540,0</Blue></> },
  { name: "Scale", value: <><Blue>100,0</Blue>,<Blue>100,0</Blue>%</>, linked: true },
  { name: "Rotation", value: <><Blue>0</Blue>x<Blue>+0,0</Blue>°</> },
];
const red = "linear-gradient(#b55152, #a34849 55%, #934243)";
const dark = "#333";
const deep = "#1f1f1f";

const TopTools = () => (
  <>
    <Grip />
    <Tools>
      <Tool aria-label="Home"><Home /></Tool>
    </Tools>
    <Split />
    <Tools>
      <Tool $on aria-label="Selection"><Arrow /></Tool>
      <Tool aria-label="Hand"><Hand /></Tool>
      <Tool aria-label="Zoom"><Magnifier /></Tool>
    </Tools>
    <Split />
    <Tools>
      <Tool $more aria-label="Orbit"><Orbit /></Tool>
      <Tool $more aria-label="Pan camera"><PanCam /></Tool>
      <Tool $more aria-label="Dolly"><Dolly /></Tool>
    </Tools>
    <Split />
    <Tools>
      <Tool aria-label="Rotation"><Rotate /></Tool>
      <Tool aria-label="Pan behind"><PanBehind /></Tool>
    </Tools>
    <Split />
    <Tools>
      <Tool $more aria-label="Rectangle"><RectShape /></Tool>
      <Tool $more aria-label="Pen"><Pen /></Tool>
      <Tool $more aria-label="Type"><TypeT /></Tool>
    </Tools>
    <Split />
    <Tools>
      <Tool aria-label="Brush"><Brush /></Tool>
      <Tool aria-label="Clone stamp"><Stamp /></Tool>
      <Tool aria-label="Eraser"><EraserIcon /></Tool>
    </Tools>
    <Split />
    <Tools>
      <Tool $more aria-label="Roto brush"><Roto /></Tool>
    </Tools>
    <Split />
    <Tools $end={35}>
      <Tool $more aria-label="Puppet pin"><Pin /></Tool>
    </Tools>
    <Split $h={34} />
    <AxisGroup>
      <Tool $ghost aria-label="Local axis"><AxisTri color="#1d4168" /></Tool>
      <Tool aria-label="World axis"><AxisTri color="#484848" ring /></Tool>
      <Tool aria-label="View axis"><AxisView /></Tool>
    </AxisGroup>
    <Split />
    <Snap>
      <Tick type="checkbox" defaultChecked />
      Snapping
    </Snap>
    <Row $gap={3}>
      <Tool $on aria-label="Snap to edges"><SnapEdge /></Tool>
      <Tool $on aria-label="Snap to features"><SnapBox /></Tool>
    </Row>
  </>
);

const Project = () => (
  <Panel>
    <ProjectTabs>
      <Title>Project</Title>
      <MenuLines />
    </ProjectTabs>
    <ProjectSearch>
      <SearchGlyph menu />
      <TextBox aria-label="Search project" />
    </ProjectSearch>
    <Assets>
      <AssetTable>
        <colgroup>
          <col width="21" />
          <col />
          <col width="30" />
          <col width="67" />
          <col width="25" />
        </colgroup>
        <thead>
          <tr>
            <th />
            <th><Divided>Name</Divided></th>
            <th><Divided $pad={5}><Tag /></Divided></th>
            <th colSpan={2}><Divided>Comment</Divided></th>
          </tr>
        </thead>
        <tbody>
          {assets.map((a) => (
            <tr key={a.name}>
              <td>{a.open && <Twirl><Chevron dir="right" /></Twirl>}</td>
              <td><AssetName>{a.icon}{a.name}</AssetName></td>
              <td><Centered><Swatch $c={a.color} /></Centered></td>
              <td />
              <td>{a.open && <Centered><FlowIcon /></Centered>}</td>
            </tr>
          ))}
        </tbody>
      </AssetTable>
    </Assets>
    <ProjectFoot>
      <FootTools>
        <Bare aria-label="Interpret footage"><Interpret /></Bare>
        <Bare aria-label="New folder"><Folder /></Bare>
        <Bare aria-label="New composition"><CompIcon /></Bare>
        <Bare aria-label="Project settings"><Rocket /></Bare>
        <Bits>8 bpc</Bits>
        <Bare aria-label="Delete"><Trash /></Bare>
      </FootTools>
      <Rail><Thumb /></Rail>
      <Corner />
    </ProjectFoot>
  </Panel>
);

const Composition = () => (
  <Panel>
    <CompTabs>
      <ActiveTab>
        <Row $gap={14}>
          <Cross />
          <Swatch $c="#ab9878" $s={15} />
          <OpenLock />
        </Row>
        <Title $on>Composition <Blue>Wild</Blue></Title>
        <MenuLines />
      </ActiveTab>
      <Row $gap={101}>
        <Plain $dim>Layer (none)</Plain>
        <Plain $dim>Footage (none)</Plain>
      </Row>
    </CompTabs>
    <Crumbs><Crumb>Wild</Crumb></Crumbs>
    <Canvas><Anchor /></Canvas>
    <ViewBar>
      <Pick $w={98}>
        <Select aria-label="Magnification"><option>100%</option></Select>
        <Chevron />
      </Pick>
      <Bar />
      <Pick $w={126}>
        <Select aria-label="Resolution"><option>(Full)</option></Select>
        <Chevron />
      </Pick>
      <Bar $r={8} />
      <ViewTool $on aria-label="Fast previews"><FastPrev /></ViewTool>
      <ViewTool aria-label="Transparency grid"><Checker /></ViewTool>
      <ViewTool $on aria-label="Mask visibility"><MaskShape /></ViewTool>
      <ViewTool aria-label="Region of interest"><Region /></ViewTool>
      <ViewTool aria-label="Guides"><GridIcon /></ViewTool>
      <Bar $l={6} $r={5} />
      <ViewTool aria-label="Channels"><Channels /></ViewTool>
      <ViewTool aria-label="Reset exposure"><Aperture /></ViewTool>
      <Exposure>+0,0</Exposure>
      <Bar $l={16} />
      <ViewTool aria-label="Take snapshot"><Camera /></ViewTool>
      <ViewTool aria-label="Show snapshot"><ShowSnap /></ViewTool>
      <Bar $l={5} $r={6} />
      <Stamped>0:45:20:32</Stamped>
    </ViewBar>
  </Panel>
);

const LayerOutline = () => (
  <Col>
    <Controls>
      <Clock>
        <Big>0:45:20:32</Big>
        <Small>136032 (50.00 fps)</Small>
      </Clock>
      <LayerSearch>
        <SearchGlyph menu />
        <TextBox aria-label="Search layers" />
      </LayerSearch>
      <Bare aria-label="Mini flowchart"><MiniFlow /></Bare>
      <ToggleSet>
        <Bare aria-label="Hide shy layers"><ShyBig /></Bare>
        <Bare aria-label="Frame blending"><Blend w={21} /></Bare>
        <Bare aria-label="Motion blur"><Blur w={21} /></Bare>
      </ToggleSet>
      <Bare aria-label="Graph editor"><GraphEd /></Bare>
    </Controls>
    <LayerHead>
      <Cells>
        <Cell as="div"><Eye /></Cell>
        <Cell as="div"><Speaker /></Cell>
        <Cell as="div"><Dot /></Cell>
        <Cell as="div"><Lock /></Cell>
      </Cells>
      <HeadCell $pad={18}><Tag /></HeadCell>
      <HeadCell>#</HeadCell>
      <HeadCell $pad={6}>Source Name</HeadCell>
      <HeadCell $pad={5}>
        <Cells $gap={4} $pad={0}>
          <Cell as="div"><Shy /></Cell>
          <Cell as="div"><Sun /></Cell>
          <Cell as="div"><Quality /></Cell>
          <Cell as="div"><Fx>fx</Fx></Cell>
          <Cell as="div"><Blend /></Cell>
          <Cell as="div"><Blur /></Cell>
          <Cell as="div"><Adjust /></Cell>
          <Cell as="div"><Cube /></Cell>
        </Cells>
      </HeadCell>
      <HeadCell $pad={5}>Parent &amp; Link</HeadCell>
      <HeadCell />
    </LayerHead>

    <Outline $bg="#4a4a4a">
      <Cells>
        <Cell $bg={dark} aria-label="Visible"><Eye /></Cell>
        <Cell aria-label="Audio" />
        <Cell $bg={dark} aria-label="Solo" />
        <Cell $bg={dark} aria-label="Lock" />
      </Cells>
      <LabelCell><Chevron /><Swatch $c="#b23737" $s={18} /></LabelCell>
      <Num>1</Num>
      <NameBox>
        <SolidIcon />
        <NameInput aria-label="Layer name" defaultValue="White Solid 1" />
      </NameBox>
      <Cells $gap={4} $pad={7}>
        <Cell $bg={dark} aria-label="Shy"><Shy /></Cell>
        <Cell $bg={dark} aria-label="Collapse" />
        <Cell $bg={dark} aria-label="Quality"><Quality solid /></Cell>
        <Cell as="div" />
        <Cell as="div" />
        <Cell $bg={dark} aria-label="Motion blur" />
        <Cell $bg={dark} aria-label="Adjustment" />
        <Cell $bg={dark} aria-label="3D" />
      </Cells>
      <Row $gap={9}>
        <Whip $in={6} aria-label="Pick whip"><Swirl /></Whip>
        <Pick $w={129} $h={21}>
          <Select aria-label="Parent"><option>None</option></Select>
          <Chevron />
        </Pick>
      </Row>
    </Outline>

    <Outline $tall>
      <span />
      <Prop $pad={34}><Chevron />Transform</Prop>
      <Value><Hot>Reset</Hot></Value>
    </Outline>
    {props.map((p) => (
      <Outline key={p.name}>
        <span />
        <Prop $pad={77}><Stopwatch />{p.name}</Prop>
        <Value>
          {p.linked && <LinkCell><LinkIcon /></LinkCell>}
          <span>{p.value}</span>
        </Value>
        <Whip aria-label="Pick whip"><Swirl /></Whip>
      </Outline>
    ))}
    <Outline $tall>
      <KeyNav>
        <Triangle dir="left" />
        <KeyCell aria-label="Keyframe"><Diamond /></KeyCell>
        <Triangle dir="right" />
      </KeyNav>
      <Prop $pad={77}>
        <StopCell aria-label="Time-Vary stop watch"><Stopwatch on /></StopCell>
        <PropGraph><GraphMini /></PropGraph>
        <Lit>Opacity</Lit>
      </Prop>
      <Value><span><Blue>100</Blue>%</span></Value>
      <Whip aria-label="Pick whip"><Swirl /></Whip>
    </Outline>

    <Outline $bg="#2d2d2d">
      <Cells>
        <Cell $bg={deep} aria-label="Visible"><Eye /></Cell>
        <Cell $bg={deep} aria-label="Audio"><Speaker /></Cell>
        <Cell $bg={deep} aria-label="Solo" />
        <Cell $bg={deep} aria-label="Lock" />
      </Cells>
      <LabelCell><Chevron dir="right" /><Swatch $c="#a9cdca" $s={18} /></LabelCell>
      <Num>2</Num>
      <NameBox><FileIcon /></NameBox>
      <Cells $gap={4} $pad={7}>
        <Cell $bg={deep} aria-label="Shy"><Shy /></Cell>
        <Cell as="div" />
        <Cell $bg={deep} aria-label="Quality"><Quality solid /></Cell>
        <Cell as="div" />
        <Cell $bg={deep} aria-label="Frame blending" />
        <Cell $bg={deep} aria-label="Motion blur" />
        <Cell $bg={deep} aria-label="Adjustment" />
        <Cell $bg={deep} aria-label="3D" />
      </Cells>
      <Row $gap={9}>
        <Whip $in={6} aria-label="Pick whip"><Swirl /></Whip>
        <Pick $w={129} $h={21} />
      </Row>
    </Outline>
    <Fill />
    <Foot>
      <FootIcons>
        <Bare aria-label="Layer switches"><Panes /></Bare>
        <Bare aria-label="Transfer controls"><Modes /></Bare>
        <Bare aria-label="In and out"><InOut /></Bare>
        <Bare aria-label="Render time"><Snail /></Bare>
      </FootIcons>
      <Timing>Frame Render Time<Lime>61ms</Lime></Timing>
      <Toggle>Toggle Switches / Modes</Toggle>
    </Foot>
  </Col>
);

const Tracks = () => (
  <Col>
    <Pad $h={6} />
    <NavBar $h={15} $bg="#676767" $r="6px"><i /><i /><i /></NavBar>
    <Ruler>{marks.map((m) => <Mark key={m}>{m}</Mark>)}</Ruler>
    <NavBar $h={25} $bg="#606060" $r="4px"><i /><i /><i /></NavBar>
    <Pad $h={5} $line />
    <Track $side="#4a4a4a"><Clip $bg={red} $top="#c46a6a" /></Track>
    <Track $tall><Beam $w={10}><IBeam /></Beam></Track>
    {props.map((p) => (
      <Track key={p.name}><Beam $w={10}><IBeam /></Beam></Track>
    ))}
    <Track $tall><Beam $w={20}><KeyFrame /></Beam></Track>
    <Track $side="#2d2d2d"><Clip $bg="#748783" $top="#8b9d99" $fold /></Track>
    <Track $fill />
    <Foot $bg={c.scroll}>
      <Zoom>
        <Mountains w={13} h={6} />
        <Range type="range" aria-label="Timeline zoom" defaultValue={0} />
        <Mountains w={24} h={11} />
      </Zoom>
    </Foot>
    <Head><HeadMark /></Head>
  </Col>
);

export default function App() {
  return (
    <Page>
      <Global />
      <TopBar>
        <TopTools />
        <WorkspaceEdge />
        <Workspaces>
          {["Default", "Review", "Learn", "Small Screen"].map((w) => <Plain key={w}>{w}</Plain>)}
        </Workspaces>
        <Grow />
        <MoreButton aria-label="More workspaces"><Chevrons /></MoreButton>
        <Split $h={34} />
        <HelpBox>
          <SearchGlyph />
          <TextBox aria-label="Search help" placeholder="Search Help" />
        </HelpBox>
      </TopBar>
      <Main>
        <Project />
        <Composition />
        <Side>
          <SideList>
            {sidePanels.map((s) => (
              <SideItem key={s} $on={s === "Preview"}>
                {s}
                {s === "Preview" && <MenuLines />}
              </SideItem>
            ))}
          </SideList>
          <SideScroll />
        </Side>
      </Main>
      <Timeline>
        <TimeTabs>
          <Row $gap={14}>
            <Cross />
            <Swatch $c="#ab9878" $s={15} />
            <Title $on>Wild</Title>
          </Row>
          <MenuLines />
        </TimeTabs>
        <TimeBody>
          <LayerOutline />
          <Tracks />
          <Gutter>
            <GutterTop><Marker /></GutterTop>
            <CompSlot><CompMark /></CompSlot>
            <Fill />
            <GutterFoot />
          </Gutter>
        </TimeBody>
        <Tip role="tooltip">
          Time-Vary stop watch: Toggle ability of property to change over time. Option-click: add or remove expression.
        </Tip>
        <Outlined $x={758} $y={41} $w={33} $h={254} />
        <Outlined $x={759} $y={337} $w={35} $h={99} />
      </Timeline>
    </Page>
  );
}
